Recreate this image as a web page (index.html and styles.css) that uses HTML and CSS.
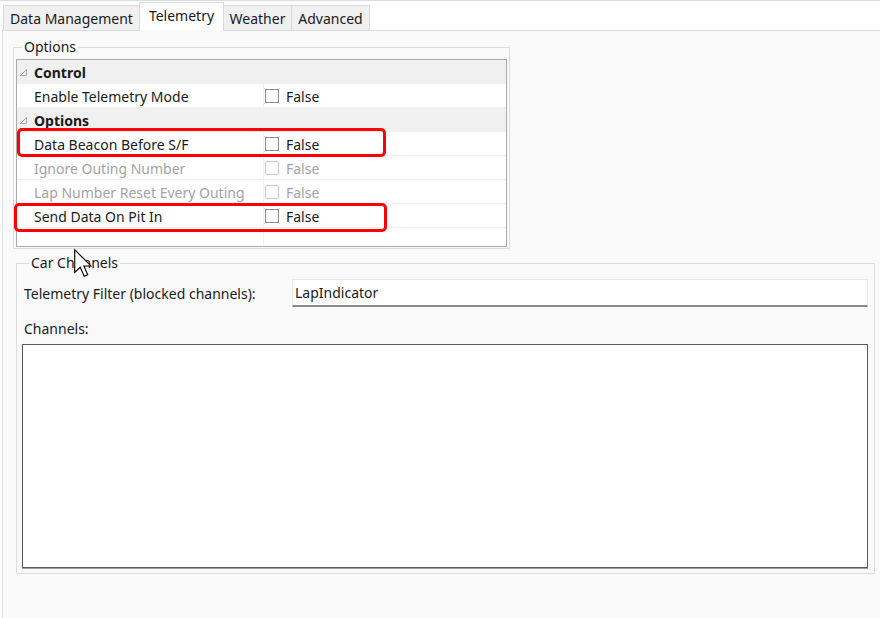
FILE: index.html
```html
<!DOCTYPE html>
<html>
<head>
<meta charset="utf-8">
<link rel="stylesheet" href="styles.css">
</head>
<body>
<div class="window">
  <div class="tabs">
    <div class="tab tab-data">Data Management</div>
    <div class="tab tab-tele active">Telemetry</div>
    <div class="tab tab-weather">Weather</div>
    <div class="tab tab-adv">Advanced</div>
  </div>
  <div class="panel">
    <div class="group group-options">
      <span class="group-title">Options</span>
      <div class="grid">
        <div class="row cat">
          <span class="gutter"><svg class="glyph" viewBox="0 0 7 7" width="7" height="7"><path d="M6.5 0.5 V6.5 H0.5 Z"/></svg></span>
          <span class="name">Control</span>
        </div>
        <div class="row">
          <span class="name">Enable Telemetry Mode</span>
          <span class="value"><span class="check"></span>False</span>
        </div>
        <div class="row cat">
          <span class="gutter"><svg class="glyph" viewBox="0 0 7 7" width="7" height="7"><path d="M6.5 0.5 V6.5 H0.5 Z"/></svg></span>
          <span class="name">Options</span>
        </div>
        <div class="row">
          <span class="name">Data Beacon Before S/F</span>
          <span class="value"><span class="check"></span>False</span>
        </div>
        <div class="row disabled">
          <span class="name">Ignore Outing Number</span>
          <span class="value"><span class="check"></span>False</span>
        </div>
        <div class="row disabled">
          <span class="name">Lap Number Reset Every Outing</span>
          <span class="value"><span class="check"></span>False</span>
        </div>
        <div class="row">
          <span class="name">Send Data On Pit In</span>
          <span class="value"><span class="check"></span>False</span>
        </div>
        <div class="row empty">
          <span class="name"></span>
          <span class="value"></span>
        </div>
      </div>
    </div>

    <div class="group group-car">
      <span class="group-title">Car Channels</span>
      <div class="filter-row">
        <span class="filter-label">Telemetry Filter (blocked channels):</span>
        <div class="textbox">LapIndicator</div>
      </div>
      <span class="channels-label">Channels:</span>
      <div class="listbox"></div>
    </div>
  </div>

  <div class="mark mark-1"></div>
  <div class="mark mark-2"></div>

  <svg class="cursor" viewBox="0 0 13 21" width="18" height="29">
    <path d="M0.5 0.5 V17 L4.5 13.2 L7.4 19.8 L9.9 18.7 L7.1 12.3 H12.2 Z" fill="#fff" stroke="#000" stroke-width="0.8" stroke-linejoin="miter"/>
  </svg>
</div>
</body>
</html>
```

FILE: styles.css
```css
* { box-sizing: border-box; }

html, body {
  margin: 0;
  padding: 0;
  background: #ffffff;
}

body {
  font-family: "Noto Sans", "Open Sans", sans-serif;
  font-size: 14px;
  color: #1a1a1a;
}

.window {
  position: relative;
  width: 880px;
  height: 618px;
  display: flex;
  flex-direction: column;
  border-top: 1px solid #dcdcdc;
  background: #ffffff;
  overflow: hidden;
}

/* ---------- tabs ---------- */
.tabs {
  display: flex;
  align-items: flex-end;
  height: 29px;
  padding-left: 3px;
  flex: 0 0 auto;
}

.tab {
  height: 25px;
  display: flex;
  align-items: center;
  justify-content: center;
  background: #f0f0f0;
  border: 1px solid #d9d9d9;
  border-bottom: none;
  margin-right: -1px;
  line-height: 16px;
  white-space: nowrap;
  padding-top: 1px;
}

.tab-data { width: 137px; }
.tab-tele { width: 85px; }
.tab-weather { width: 69px; }
.tab-adv { width: 79px; }

.tab.active {
  height: 29px;
  margin-bottom: -1px;
  background: #ffffff;
  position: relative;
  z-index: 1;
  padding-top: 0;
  padding-bottom: 2px;
}

/* ---------- panel ---------- */
.panel {
  flex: 1 1 auto;
  margin-left: 2px;
  background: #f9f9f9;
  border-top: 1px solid #dadada;
  border-left: 1px solid #e3e3e3;
  display: flex;
  flex-direction: column;
  align-items: flex-start;
}

.group {
  display: flex;
  flex-direction: column;
  border: 1px solid #dcdcdc;
}

.group-title {
  align-self: flex-start;
  margin-top: -9px;
  padding: 0 2px;
  line-height: 16px;
  height: 16px;
  background: #f9f9f9;
  white-space: nowrap;
}

.group-options {
  margin: 16px 0 0 10px;
  width: 497px;
}

.group-options .group-title {
  margin-left: 8px;
  margin-bottom: 4px;
}

/* ---------- property grid ---------- */
.grid {
  margin: 0 2px 1px 2px;
  border: 1px solid #a9a9a9;
  background: #ffffff;
  display: flex;
  flex-direction: column;
}

.row {
  display: flex;
  height: 24px;
  border-bottom: 1px solid #f0f0f0;
  align-items: stretch;
}

.row .name {
  flex: 0 0 247px;
  padding-left: 17px;
  padding-top: 1px;
  display: flex;
  align-items: center;
  border-right: 1px solid #f0f0f0;
  white-space: nowrap;
}

.row .value {
  flex: 1 1 auto;
  display: flex;
  align-items: center;
  padding-left: 1px;
  padding-top: 1px;
}

.check {
  width: 14px;
  height: 14px;
  border: 1px solid #8f8f8f;
  background: #ffffff;
  margin-right: 7px;
  flex: 0 0 auto;
}

.row.cat {
  background: #f0f0f0;
  border-bottom: 1px solid #f0f0f0;
}

.row.cat .gutter {
  flex: 0 0 17px;
  display: flex;
  align-items: center;
  padding-left: 3px;
  padding-top: 1px;
}

.row.cat .name {
  padding-left: 0;
  border-right: none;
  font-weight: bold;
}

.glyph path {
  fill: none;
  stroke: #a6a6a6;
  stroke-width: 1;
}

.row.disabled {
  color: #a3a3a3;
}

.row.disabled .check {
  border-color: #cccccc;
}

.row.empty {
  height: 18px;
  border-bottom: none;
}

/* ---------- car channels ---------- */
.group-car {
  margin: 14px 0 0 13px;
  width: 859px;
  padding: 0 6px 5px 5px;
}

.group-car .group-title {
  margin-left: 7px;
}

.filter-row {
  display: flex;
  align-items: center;
  margin-top: 8px;
}

.filter-label {
  flex: 0 0 270px;
  padding-left: 2px;
  white-space: nowrap;
}

.textbox {
  flex: 1 1 auto;
  height: 28px;
  background: #ffffff;
  border: 1px solid #e6e6e6;
  border-bottom: 2px solid #8a8a8a;
  display: flex;
  align-items: center;
  padding-left: 2px;
}

.channels-label {
  margin: 14px 0 7px 2px;
  line-height: 16px;
}

.listbox {
  height: 224px;
  background: #ffffff;
  border: 1px solid #5a5a5a;
  box-shadow: 0 1px 0 #9c9c9c;
}

/* ---------- overlays ---------- */
.mark {
  position: absolute;
  border: 3px solid #ff0000;
  border-radius: 5px;
  z-index: 5;
}

.mark-1 {
  left: 17px;
  top: 127px;
  width: 369px;
  height: 29px;
}

.mark-2 {
  left: 14px;
  top: 202px;
  width: 373px;
  height: 29px;
}

.cursor {
  position: absolute;
  left: 74px;
  top: 248px;
  z-index: 6;
}
```
